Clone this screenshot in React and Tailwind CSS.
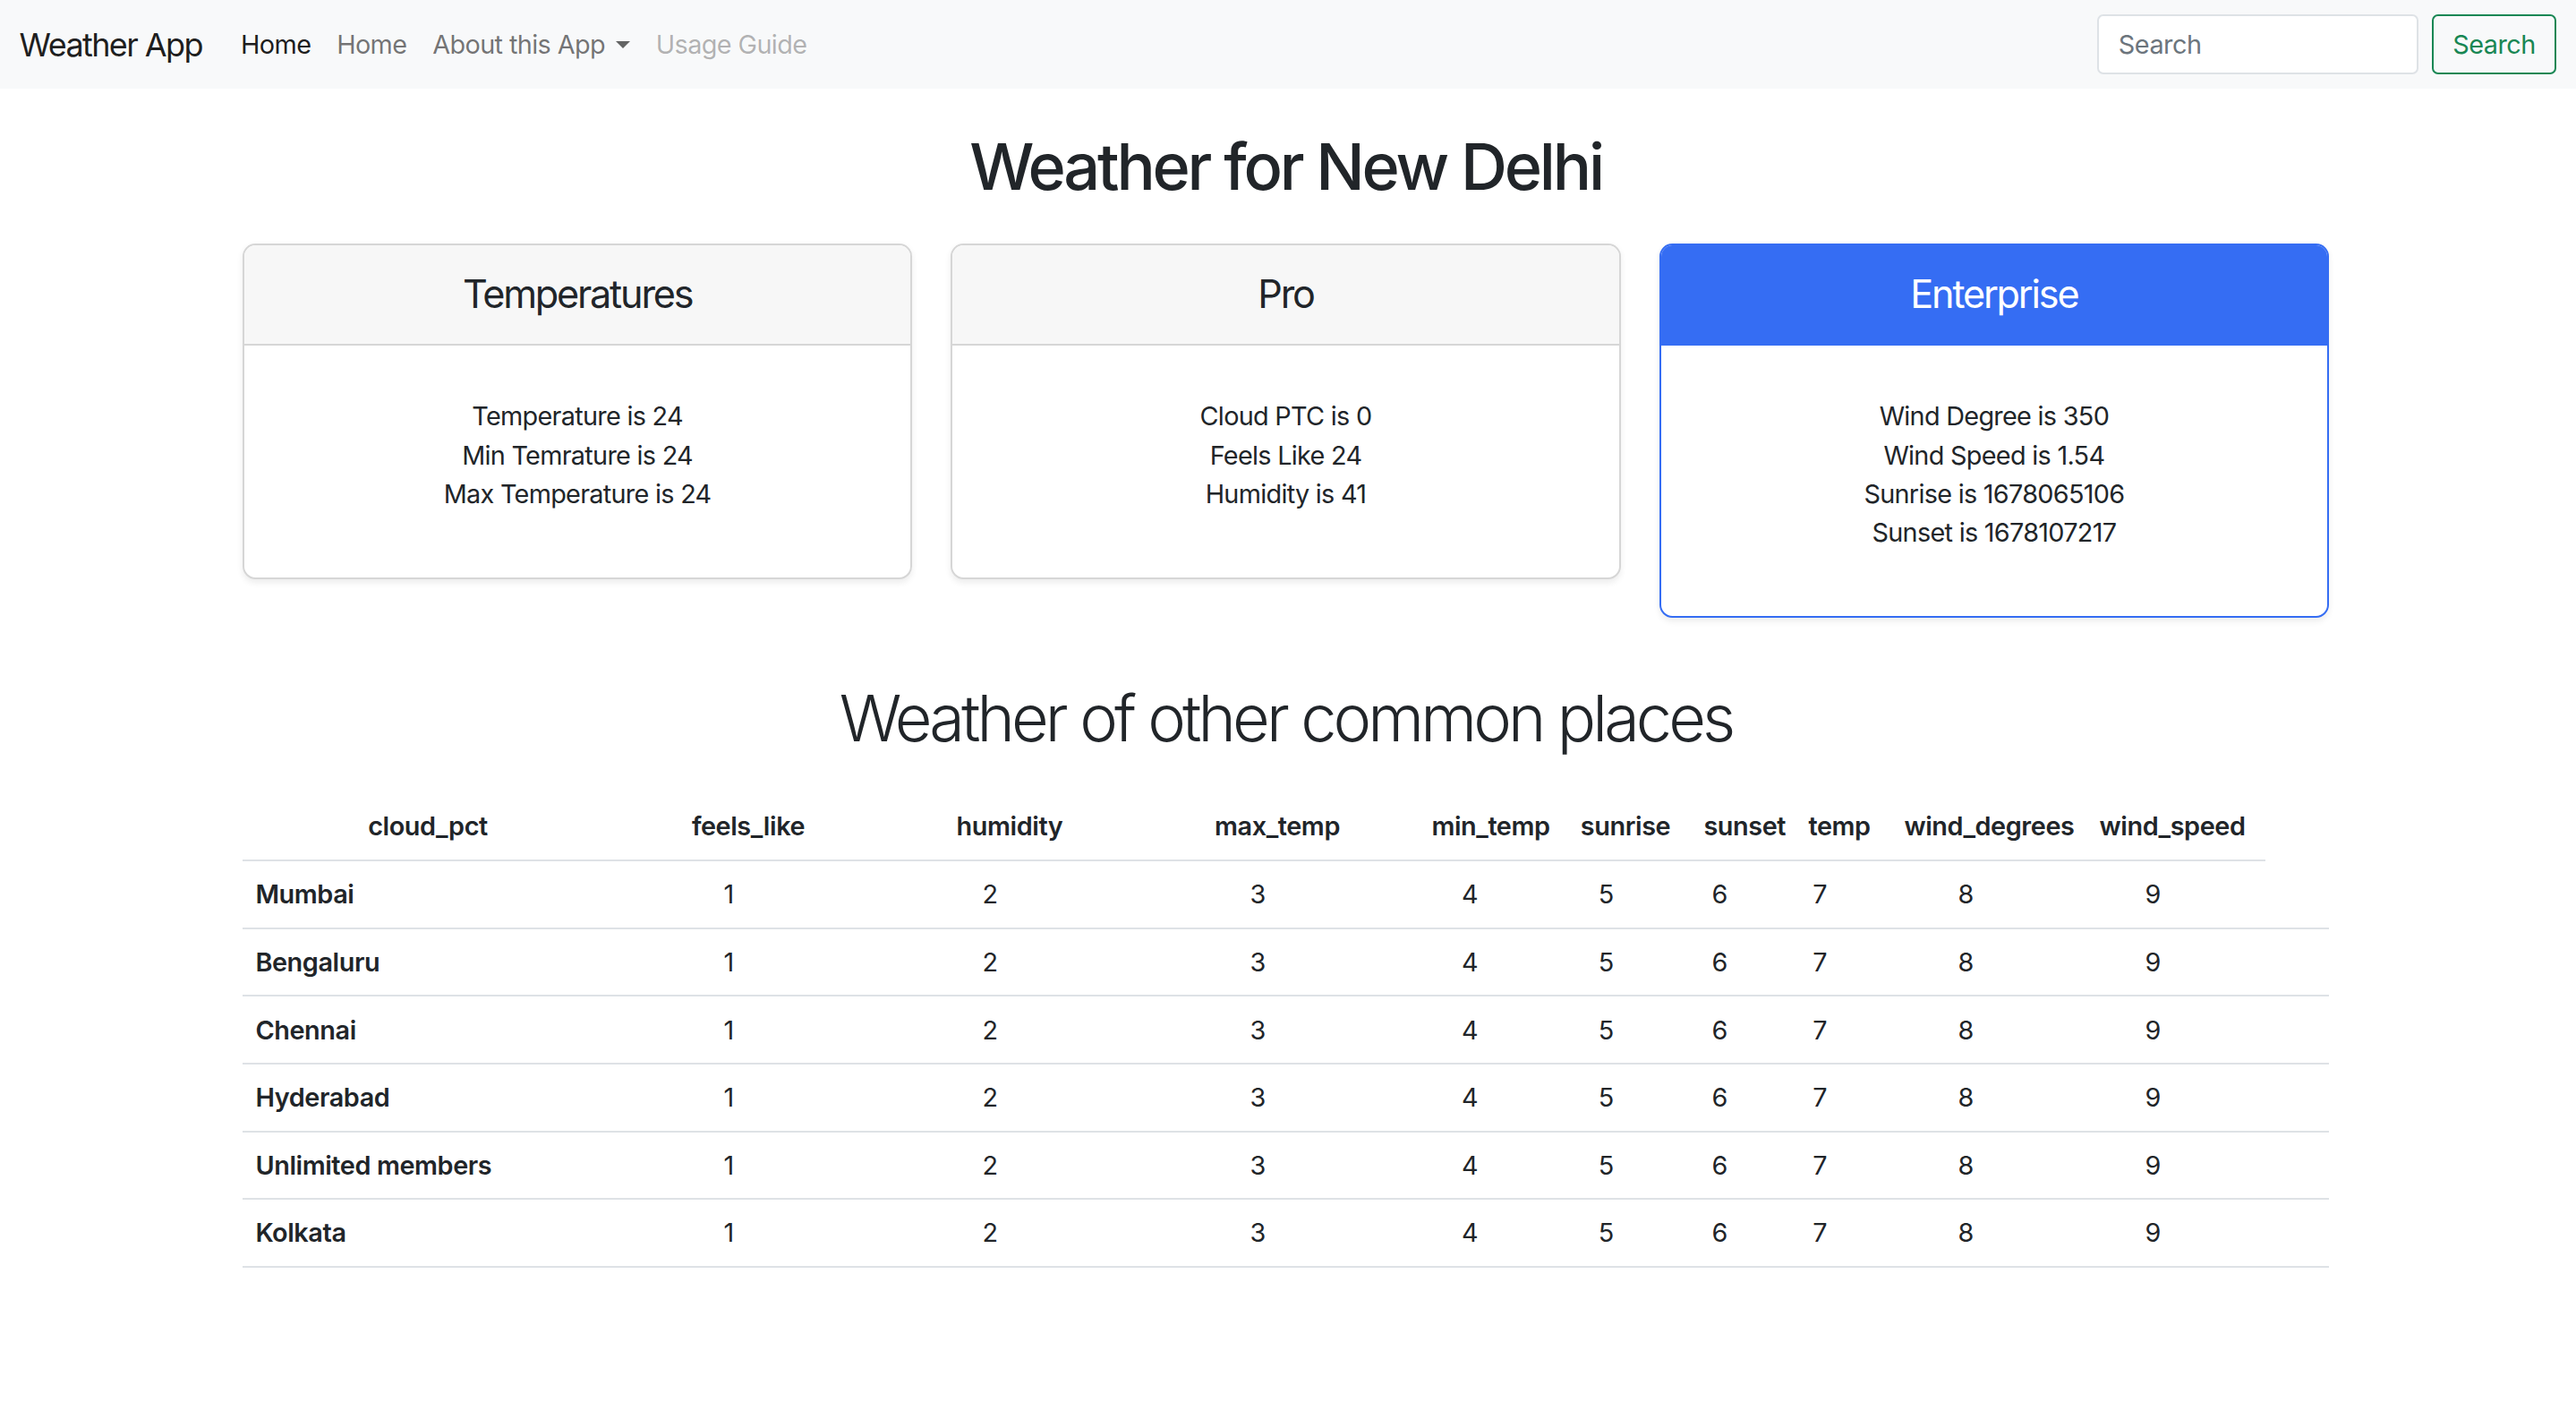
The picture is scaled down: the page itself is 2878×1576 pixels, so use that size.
import React from "react";

const cards = [
  {
    title: "Temperatures",
    lines: ["Temperature is 24", "Min Temrature is 24", "Max Temperature is 24"],
  },
  {
    title: "Pro",
    lines: ["Cloud PTC is 0", "Feels Like 24", "Humidity is 41"],
  },
  {
    title: "Enterprise",
    lines: [
      "Wind Degree is 350",
      "Wind Speed is 1.54",
      "Sunrise is 1678065106",
      "Sunset is 1678107217",
    ],
    primary: true,
  },
];

const columns = [
  "cloud_pct",
  "feels_like",
  "humidity",
  "max_temp",
  "min_temp",
  "sunrise",
  "sunset",
  "temp",
  "wind_degrees",
  "wind_speed",
];

// column widths in px, the last one is the empty trailing cell
const widths = [414, 302, 282, 316, 158, 146, 108, 116, 210, 208, 71];

const cities = ["Mumbai", "Bengaluru", "Chennai", "Hyderabad", "Unlimited members", "Kolkata"];

function Card({ title, lines, primary }) {
  return (
    <div
      className={`rounded-[14.4px] border-2 bg-white shadow-[0_3.6px_7.2px_rgba(0,0,0,0.075)] overflow-hidden ${
        primary ? "border-[#356df3]" : "border-[#d6d6d6]"
      }`}
    >
      <div
        className={`py-[28.8px] text-center border-b-2 ${
          primary ? "bg-[#356df3] text-white border-[#356df3]" : "bg-[#f7f7f7] border-[#d6d6d6]"
        }`}
      >
        <h4 className="text-[43.2px] leading-[1.2] font-normal tracking-[-2.2px]">{title}</h4>
      </div>
      <div className="p-[28.8px] text-center">
        <ul className="mt-[28.8px] mb-[43.2px] text-[28.8px] leading-[43.2px] tracking-[-0.7px]">
          {lines.map((l) => (
            <li key={l}>{l}</li>
          ))}
        </ul>
      </div>
    </div>
  );
}

export default function App() {
  return (
    <div className="min-h-screen bg-white text-[#212529] font-['Inter',sans-serif]">
      {/* NAVBAR */}
      <nav className="h-[99px] bg-[#f8f9fa] flex items-center px-[21.6px]">
        <a className="text-[36px] text-black/90 mr-[28.8px] tracking-[-1.6px]">Weather App</a>
        <ul className="flex items-center text-[28.8px] tracking-[-0.6px]">
          <li>
            <a className="px-[14.4px] text-black/90">Home</a>
          </li>
          <li>
            <a className="px-[14.4px] text-black/55">Home</a>
          </li>
          <li>
            <a className="px-[14.4px] text-black/55 inline-flex items-center">
              About this App
              <span className="ml-[12px] inline-block w-0 h-0 border-t-[8.6px] border-t-black/60 border-x-[8.6px] border-x-transparent"></span>
            </a>
          </li>
          <li>
            <a className="px-[14.4px] text-black/30">Usage Guide</a>
          </li>
        </ul>
        <form className="ml-auto flex gap-[14.4px]">
          <input
            placeholder="Search"
            className="w-[359px] h-[67px] rounded-[6.75px] border-2 border-[#dee2e6] bg-white px-[21.6px] text-[28.8px] tracking-[-0.5px] placeholder:text-[#6c757d] outline-none"
          />
          <button
            type="button"
            className="h-[67px] px-[21.6px] rounded-[6.75px] border-2 border-[#198754] text-[#198754] text-[28.8px] tracking-[-0.5px]"
          >
            Search
          </button>
        </form>
      </nav>

      <main className="w-[2331px] ml-[271px]">
        <h1 className="text-center text-[72px] leading-[1.2] font-medium pt-[44px] tracking-[-3.2px]">
          Weather for New Delhi
        </h1>

        {/* CARDS */}
        <div className="grid grid-cols-3 gap-[43.2px] items-start mt-[43px]">
          {cards.map((c) => (
            <Card key={c.title} {...c} />
          ))}
        </div>

        <h2 className="text-center text-[72px] leading-[1.2] font-light mt-[69px] tracking-[-3.9px]">
          Weather of other common places
        </h2>

        {/* TABLE */}
        <table className="table-fixed w-full mt-[40px] text-[28.8px] tracking-[-0.4px]">
          <colgroup>
            {widths.map((w, i) => (
              <col key={i} style={{ width: w }} />
            ))}
          </colgroup>
          <thead>
            <tr className="h-[75.6px]">
              {columns.map((c) => (
                <th key={c} className="px-[14.4px] text-center font-semibold border-b-2 border-[#dee2e6]">
                  {c}
                </th>
              ))}
            </tr>
          </thead>
          <tbody>
            {cities.map((city) => (
              <tr key={city} className="h-[75.6px]">
                <th className="px-[14.4px] text-left font-semibold border-b-2 border-[#dee2e6]">{city}</th>
                {[1, 2, 3, 4, 5, 6, 7, 8, 9].map((n) => (
                  <td key={n} className="pl-[14.4px] pr-[58px] text-center border-b-2 border-[#dee2e6]">
                    {n}
                  </td>
                ))}
                <td className="border-b-2 border-[#dee2e6]"></td>
              </tr>
            ))}
          </tbody>
        </table>
      </main>
    </div>
  );
}
